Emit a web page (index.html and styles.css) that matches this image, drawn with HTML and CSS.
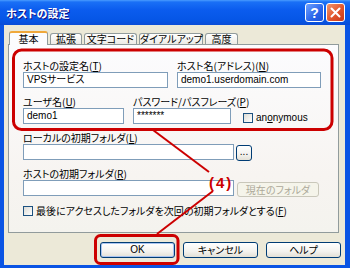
FILE: index.html
```html
<!DOCTYPE html>
<html lang="ja">
<head>
<meta charset="UTF-8" />
<title>ホストの設定</title>
<link rel="stylesheet" href="styles.css">
</head>
<body>
<div class="window">
  <div class="titlebar">
    <span class="title">ホストの設定</span>
    <span class="tb-btn help">?</span>
    <span class="tb-btn close">
      <svg width="11" height="11" viewBox="0 0 11 11"><path d="M1.5 1.5 L9.5 9.5 M9.5 1.5 L1.5 9.5" stroke="#fff" stroke-width="2" stroke-linecap="round"/></svg>
    </span>
  </div>

  <div class="client">
    <div class="tabs">
      <span class="tab active t-basic">基本</span>
      <span class="tab t-ext">拡張</span>
      <span class="tab t-code">文字コード</span>
      <span class="tab t-dial">ダイアルアップ</span>
      <span class="tab t-adv">高度</span>
    </div>

    <div class="panel">
      <div class="row">
        <div class="group w-host">
          <label>ホストの設定名(<u>T</u>)</label>
          <div class="field">VPSサービス</div>
        </div>
        <div class="group w-addr">
          <label>ホスト名(アドレス)(<u>N</u>)</label>
          <div class="field">demo1.userdomain.com</div>
        </div>
      </div>

      <div class="row">
        <div class="group w-user">
          <label>ユーザ名(<u>U</u>)</label>
          <div class="field">demo1</div>
        </div>
        <div class="group w-pass">
          <label>パスワード/パスフレーズ(<u>P</u>)</label>
          <div class="field">*******</div>
        </div>
        <div class="check anon">
          <span class="cbox"></span>
          <span class="latin">an<u>o</u>nymous</span>
        </div>
      </div>

      <div class="row">
        <div class="group w-folder">
          <label>ローカルの初期フォルダ(<u>L</u>)</label>
          <div class="field"></div>
        </div>
        <span class="btn browse">...</span>
      </div>

      <div class="row">
        <div class="group w-folder">
          <label>ホストの初期フォルダ(<u>R</u>)</label>
          <div class="field"></div>
        </div>
        <span class="btn current">現在のフォルダ</span>
      </div>

      <div class="check last">
        <span class="cbox"></span>
        <span>最後にアクセスしたフォルダを次回の初期フォルダとする(<u>F</u>)</span>
      </div>
    </div>

    <div class="buttons">
      <span class="btn default">OK</span>
      <span class="btn">キャンセル</span>
      <span class="btn">ヘルプ</span>
    </div>
  </div>

  <!-- 注釈（赤枠と引き出し線） -->
  <svg class="marks" width="350" height="268" viewBox="0 0 350 268">
    <rect x="13.5" y="50" width="318.5" height="79.5" rx="8" />
    <rect x="95.5" y="235.5" width="82.5" height="28" rx="5" />
    <line x1="153" y1="130" x2="209" y2="172" />
    <line x1="213" y1="191" x2="157" y2="234" />
    <text x="209" y="188">(4)</text>
  </svg>
</div>
</body>
</html>
```

FILE: styles.css
```css
* {
  box-sizing: border-box;
}
body {
  margin: 0;
  font-family: "Noto Sans CJK JP", sans-serif;
  font-size: 10px;
  font-feature-settings: "palt";
  color: #000;
}
.window {
  position: relative;
  width: 350px;
  height: 268px;
  display: flex;
  flex-direction: column;
  background: #0a54e4;
}
.titlebar {
  height: 25px;
  display: flex;
  align-items: center;
  padding: 0 5px 0 6px;
  background: linear-gradient(#4a9cff 0, #1a70f6 2px, #0b5cee 40%, #0656e6 80%, #0a4cd6 100%);
  color: #fff;
}
.title {
  flex: 1;
  font-size: 11px;
  font-weight: bold;
  text-shadow: 1px 1px #0f1089;
}
.tb-btn {
  width: 19px;
  height: 19px;
  margin-left: 2px;
  border: 1px solid #fff;
  border-radius: 3px;
  display: flex;
  align-items: center;
  justify-content: center;
  color: #fff;
  font-family: "Liberation Sans", sans-serif;
  font-size: 14px;
  font-weight: bold;
}
.help {
  background: linear-gradient(135deg, #6fa2ff, #2a64ea 60%, #1d52d8);
}
.close {
  background: linear-gradient(135deg, #f0966e, #e1552c 55%, #c9381a);
}
.client {
  flex: 1;
  margin: 0 5px 3px 4px;
  padding: 6px 0 0 4px;
  background: #ece9d8;
  display: flex;
  flex-direction: column;
}
.tabs {
  height: 13px;
  display: flex;
  align-items: flex-end;
  gap: 2px;
  padding-left: 1px;
}
.tab {
  height: 11px;
  border: 1px solid #919b9c;
  border-bottom: none;
  border-radius: 3px 3px 0 0;
  background: linear-gradient(#fff, #ecebe6);
  line-height: 10px;
  text-align: center;
  white-space: nowrap;
}
.tab.active {
  position: relative;
  z-index: 1;
  height: 14px;
  margin-bottom: -1px;
  border-top: 2px solid #f0a83a;
  background: #fcfcfe;
  line-height: 12px;
}
.t-basic { width: 39px; }
.t-ext { width: 32px; }
.t-code { width: 53px; }
.t-dial { width: 64px; }
.t-adv { width: 33px; }
.panel {
  width: 331px;
  height: 189px;
  padding: 14px 0 0 14px;
  border: 1px solid #919b9c;
  background: linear-gradient(#fcfcfe, #f7f4f1 70%, #f4f3ee);
}
.row {
  display: flex;
  align-items: flex-end;
  margin-bottom: 7px;
}
.group label {
  display: block;
  height: 13px;
  line-height: 13px;
  white-space: nowrap;
}
.field {
  height: 16px;
  padding-left: 3px;
  border: 1px solid #7f9db9;
  background: #fff;
  font-family: "Liberation Sans", "Noto Sans CJK JP", sans-serif;
  line-height: 14px;
  white-space: nowrap;
}
.w-host {
  width: 145px;
  margin-right: 9px;
}
.w-addr {
  width: 144px;
}
.w-user {
  width: 101px;
  margin-right: 9px;
}
.w-pass {
  width: 98px;
}
.w-folder {
  width: 211px;
  margin-right: 2px;
}
.check {
  display: flex;
  align-items: center;
  gap: 3px;
  white-space: nowrap;
}
.anon {
  margin: 0 0 1px 12px;
}
.latin {
  font-family: "Liberation Sans", sans-serif;
}
.cbox {
  width: 10px;
  height: 10px;
  border: 1px solid #1c5180;
  background: linear-gradient(135deg, #dcdbd5, #fff);
}
.last {
  margin-top: 6px;
}
.btn {
  height: 16px;
  border: 1px solid #003c74;
  border-radius: 3px;
  background: linear-gradient(#fff, #f3f2ee 60%, #e3e0d6);
  text-align: center;
  line-height: 14px;
  white-space: nowrap;
}
.browse {
  width: 16px;
  margin-bottom: -1px;
  font-family: "Liberation Sans", sans-serif;
  line-height: 12px;
}
.current {
  width: 82px;
  height: 15px;
  margin-left: 1px;
  margin-bottom: -1px;
  border-color: #c9c7ba;
  color: #aca899;
  background: #f5f4ea;
}
.buttons {
  display: flex;
  justify-content: flex-end;
  gap: 8px;
  padding: 9px 4px 0 0;
}
.buttons .btn {
  width: 75px;
}
.btn.default {
  box-shadow: inset 0 0 0 1px #a9c4f0;
  font-family: "Liberation Sans", sans-serif;
}
.marks {
  position: absolute;
  left: 0;
  top: 0;
  pointer-events: none;
}
.marks rect,
.marks line {
  fill: none;
  stroke: #cc0000;
}
.marks rect {
  stroke-width: 3;
}
.marks line {
  stroke-width: 2;
}
.marks text {
  fill: #cc0000;
  font-family: "Liberation Sans", sans-serif;
  font-size: 15px;
  font-weight: bold;
  letter-spacing: 2px;
}
```
